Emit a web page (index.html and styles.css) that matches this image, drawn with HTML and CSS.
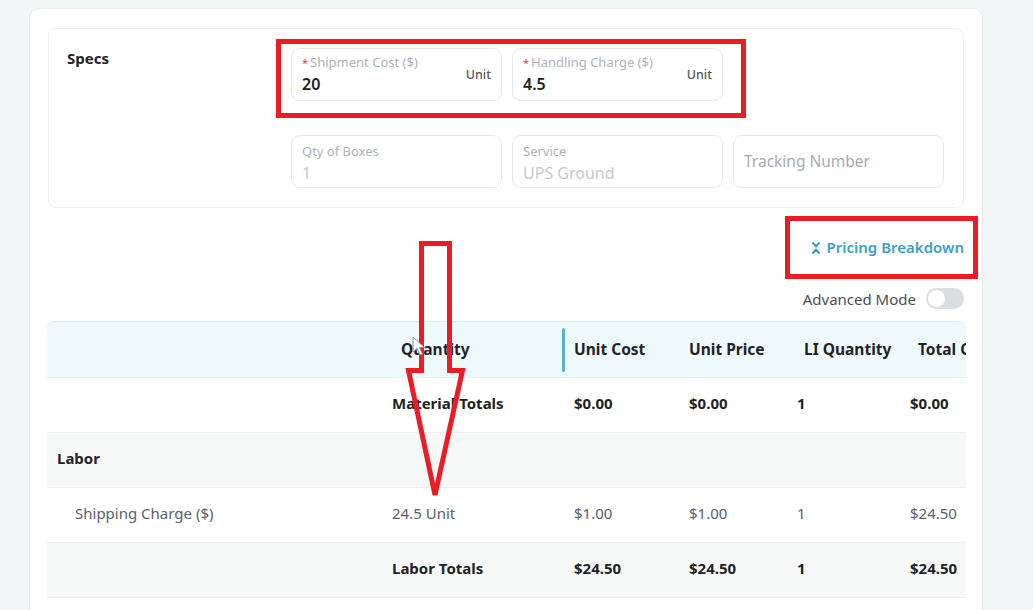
FILE: index.html
```html
<!DOCTYPE html>
<html>
<head>
<meta charset="utf-8">
<title>Shipment</title>
<link rel="stylesheet" href="styles.css">
</head>
<body>
<div class="page">
  <div class="card">

    <section class="specs">
      <h3 class="specs-title">Specs</h3>
      <div class="field-grid">
        <div class="field">
          <div class="field-main">
            <div class="field-label"><span class="req">*</span>Shipment Cost ($)</div>
            <div class="field-value">20</div>
          </div>
          <span class="field-unit">Unit</span>
        </div>
        <div class="field">
          <div class="field-main">
            <div class="field-label"><span class="req">*</span>Handling Charge ($)</div>
            <div class="field-value">4.5</div>
          </div>
          <span class="field-unit">Unit</span>
        </div>
        <div class="field field-disabled new-row">
          <div class="field-main">
            <div class="field-label">Qty of Boxes</div>
            <div class="field-value">1</div>
          </div>
        </div>
        <div class="field field-disabled">
          <div class="field-main">
            <div class="field-label">Service</div>
            <div class="field-value">UPS Ground</div>
          </div>
        </div>
        <div class="field field-empty">
          <span class="placeholder">Tracking Number</span>
        </div>
      </div>
    </section>

    <div class="toolbar">
      <a class="breakdown-link" href="#">
        <svg class="collapse-icon" width="10" height="14" viewBox="0 0 10 14">
          <path d="M2 2 L5 5.5 L8 2 M2 12 L5 8.5 L8 12" fill="none" stroke="currentColor" stroke-width="2" stroke-linecap="round" stroke-linejoin="round"/>
        </svg>
        Pricing Breakdown
      </a>
      <div class="mode-switch">
        <span>Advanced Mode</span>
        <span class="toggle"><span class="knob"></span></span>
      </div>
    </div>

    <div class="table-wrap">
      <table class="pricing">
        <colgroup>
          <col class="c-name">
          <col class="c-qty">
          <col class="c-money">
          <col class="c-money">
          <col class="c-li">
          <col class="c-total">
        </colgroup>
        <thead>
          <tr>
            <th></th>
            <th class="th-qty">Quantity</th>
            <th class="th-resized">Unit Cost</th>
            <th>Unit Price</th>
            <th class="th-li">LI Quantity</th>
            <th class="th-total">Total Cost</th>
          </tr>
        </thead>
        <tbody>
          <tr class="row-total">
            <td></td>
            <td>Material Totals</td>
            <td>$0.00</td>
            <td>$0.00</td>
            <td>1</td>
            <td>$0.00</td>
          </tr>
          <tr class="row-group">
            <td>Labor</td>
            <td></td><td></td><td></td><td></td><td></td>
          </tr>
          <tr class="row-item">
            <td class="indent">Shipping Charge ($)</td>
            <td>24.5 Unit</td>
            <td>$1.00</td>
            <td>$1.00</td>
            <td>1</td>
            <td>$24.50</td>
          </tr>
          <tr class="row-total row-shaded">
            <td></td>
            <td>Labor Totals</td>
            <td>$24.50</td>
            <td>$24.50</td>
            <td>1</td>
            <td>$24.50</td>
          </tr>
          <tr class="row-item">
            <td></td><td></td><td></td><td></td><td></td><td></td>
          </tr>
        </tbody>
      </table>
    </div>

  </div>
</div>

<!-- review markup drawn on top of the form -->
<svg class="markup" width="1033" height="610" viewBox="0 0 1033 610">
  <g fill="none" stroke="#ec1c24" stroke-width="5" stroke-linejoin="miter">
    <rect x="278.5" y="41.5" width="465" height="74"/>
    <rect x="787.5" y="218.5" width="188" height="58"/>
    <polygon points="421.5,243.5 449.5,243.5 449.5,370.5 462.5,370.5 435,495 408.5,370.5 421.5,370.5"/>
  </g>
  <path d="M413 337 L413 352 L417 348.5 L420 355 L422.5 354 L419.5 347.5 L424.5 347.5 Z" fill="#fff" stroke="#8d9399" stroke-width="1"/>
</svg>
</body>
</html>
```

FILE: styles.css
```css
* { box-sizing: border-box; }

body {
  margin: 0;
  background: #f2f6f7;
  color: #1f2326;
  font-family: "Noto Sans", "Open Sans", Arial, sans-serif;
  font-size: 15px;
  overflow: hidden;
}

.page { padding: 8px 50px 0 29px; }

.card {
  width: 954px;
  min-height: 640px;
  background: #fff;
  border: 1px solid #e7ecee;
  border-radius: 10px;
  padding: 19px 18px 0 18px;
}

/* specs block */
.specs {
  display: flex;
  border: 1px solid #eef1f2;
  border-radius: 8px;
  padding: 19px 18px 19px 18px;
}
.specs-title {
  width: 224px;
  margin: 0;
  font-size: 15px;
  font-weight: 700;
  color: #1f2326;
}
.field-grid {
  display: grid;
  grid-template-columns: repeat(3, 211px);
  column-gap: 10px;
  row-gap: 34px;
}
.field-grid .new-row { grid-column: 1; }

.field {
  height: 53px;
  display: flex;
  align-items: center;
  justify-content: space-between;
  border: 1px solid #e5e8ea;
  border-radius: 9px;
  padding: 0 10px;
}
.field-main { align-self: flex-start; padding-top: 5px; }
.field-label {
  font-size: 13px;
  line-height: 17px;
  color: #aeb3b8;
}
.field-disabled .field-main { padding-top: 7px; }
.req { color: #d9434c; margin-right: 2px; font-size: 11px; }
.field-value {
  font-size: 16px;
  line-height: 22px;
  font-weight: 600;
  color: #1d2124;
  margin-top: 2px;
}
.field-unit {
  font-size: 12.5px;
  font-weight: 500;
  color: #55595d;
}
.field-disabled .field-value { font-weight: 400; color: #c6cacd; }
.placeholder { font-size: 15.5px; color: #a6acb1; margin-top: -2px; }

/* toolbar above the table */
.toolbar {
  display: flex;
  flex-direction: column;
  align-items: flex-end;
}
.breakdown-link {
  display: flex;
  align-items: center;
  gap: 6px;
  margin-top: 29px;
  height: 20px;
  color: #3b9fc8;
  font-weight: 600;
  font-size: 15px;
  text-decoration: none;
}
.collapse-icon { margin-top: 1px; }
.mode-switch {
  display: flex;
  align-items: center;
  gap: 10px;
  margin-top: 31px;
  font-size: 15px;
  color: #4a4f53;
}
.toggle {
  width: 38px;
  height: 21px;
  border-radius: 11px;
  background: #dadee0;
  padding: 2px;
}
.knob {
  display: block;
  width: 17px;
  height: 17px;
  border-radius: 50%;
  background: #fff;
}

/* pricing table */
.table-wrap {
  margin: 12px -2px 0 -1px;
  overflow: hidden;
  border-top: 1px solid #d8edf4;
  border-radius: 8px 8px 0 0;
}
.pricing {
  table-layout: fixed;
  border-collapse: collapse;
  width: 1000px;
}
.c-name { width: 336px; }
.c-qty { width: 181px; }
.c-money { width: 115px; }
.c-li { width: 114px; }
.c-total { width: 139px; }

.pricing th {
  height: 55px;
  background: #eef9fc;
  text-align: left;
  font-weight: 700;
  font-size: 15.5px;
  padding: 0 10px 1px 10px;
  white-space: nowrap;
  border-bottom: 1px solid #e2eff3;
}
.pricing .th-qty { padding-left: 18px; }
.th-resized { position: relative; }
.th-resized::before {
  content: "";
  position: absolute;
  left: -2px;
  top: 6px;
  bottom: 5px;
  width: 3px;
  border-radius: 2px;
  background: #5bb3d2;
}

.pricing td {
  height: 55px;
  padding: 0 10px 4px 10px;
  white-space: nowrap;
  border-bottom: 1px solid #edf0f1;
}
.pricing td:nth-child(2) { padding-left: 9px; }
.pricing td:nth-child(5) { padding-left: 3px; }
.pricing td:nth-child(6) { padding-left: 2px; }

.row-total td { font-weight: 700; color: #1f2326; }
.row-group td { background: #f7f9f9; font-weight: 700; color: #1f2326; }
.row-shaded td { background: #f7f9f9; }
.row-item td { color: #5b6166; }
.pricing td.indent { padding-left: 28px; }

.markup {
  position: absolute;
  left: 0;
  top: 0;
  pointer-events: none;
}
```
